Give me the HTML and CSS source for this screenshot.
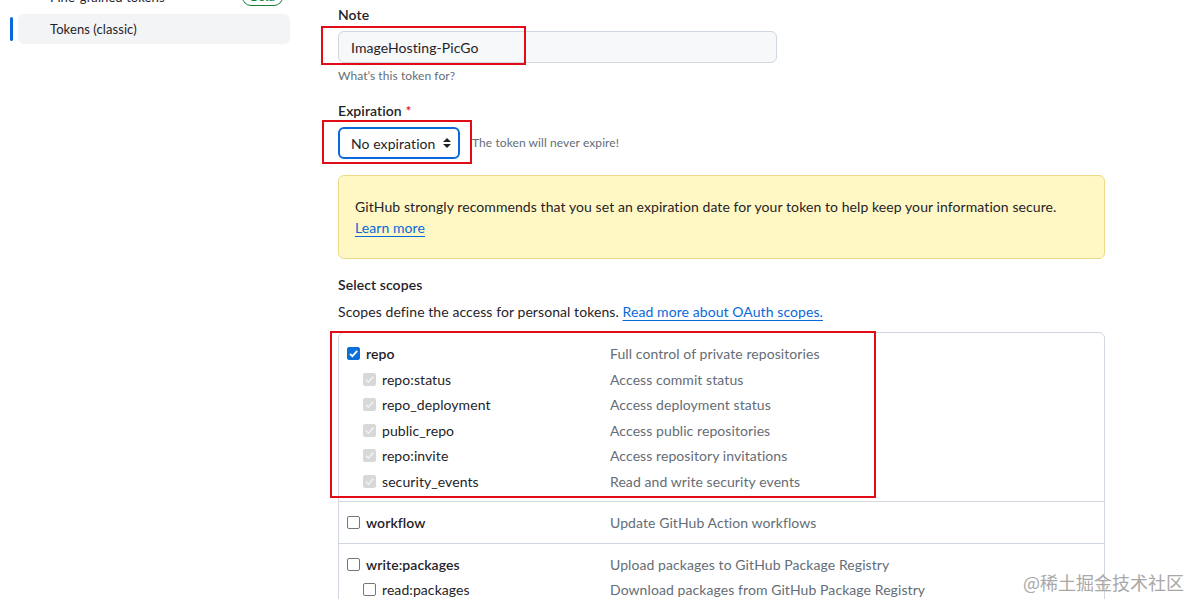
FILE: index.html
```html
<!DOCTYPE html>
<html>
<head>
<meta charset="utf-8">
<link rel="stylesheet" href="styles.css">
</head>
<body>
<div class="page">
  <aside class="sidebar">
    <div class="nav-item">
      <span class="nav-bar empty"></span>
      <span class="nav-link">Fine-grained tokens <span class="badge">Beta</span></span>
    </div>
    <div class="nav-item">
      <span class="nav-bar"></span>
      <span class="nav-link active">Tokens (classic)</span>
    </div>
  </aside>

  <main class="main">
    <div class="field">
      <label class="label">Note</label>
      <div class="input">ImageHosting-PicGo</div>
      <p class="note">What’s this token for?</p>
    </div>

    <div class="field">
      <label class="label">Expiration <span class="req">*</span></label>
      <div class="select-row">
        <div class="select">No expiration
          <svg class="caret" width="10" height="12" viewBox="0 0 10 12"><path d="M5 1 L9 5 H1 Z M5 11 L1 7 H9 Z" fill="#1f2328"/></svg>
        </div>
        <span class="note inline">The token will never expire!</span>
      </div>
    </div>

    <div class="flash">
      GitHub strongly recommends that you set an expiration date for your token to help keep your information secure.<br>
      <a class="link">Learn more</a>
    </div>

    <h3 class="label scopes-title">Select scopes</h3>
    <p class="desc">Scopes define the access for personal tokens. <a class="link">Read more about OAuth scopes.</a></p>

    <div class="scopes">
      <div class="scope-group">
        <div class="scope-row">
          <span class="scope-name"><span class="cb checked"><svg viewBox="0 0 13 13"><path d="M3 6.8 L5.4 9.2 L10.2 3.8" stroke="#fff" stroke-width="1.8" fill="none"/></svg></span><b>repo</b></span>
          <span class="scope-desc">Full control of private repositories</span>
        </div>
        <div class="scope-row sub">
          <span class="scope-name"><span class="cb disabled"><svg viewBox="0 0 13 13"><path d="M3 6.8 L5.4 9.2 L10.2 3.8" stroke="#f2f2f2" stroke-width="1.6" fill="none"/></svg></span>repo:status</span>
          <span class="scope-desc">Access commit status</span>
        </div>
        <div class="scope-row sub">
          <span class="scope-name"><span class="cb disabled"><svg viewBox="0 0 13 13"><path d="M3 6.8 L5.4 9.2 L10.2 3.8" stroke="#f2f2f2" stroke-width="1.6" fill="none"/></svg></span>repo_deployment</span>
          <span class="scope-desc">Access deployment status</span>
        </div>
        <div class="scope-row sub">
          <span class="scope-name"><span class="cb disabled"><svg viewBox="0 0 13 13"><path d="M3 6.8 L5.4 9.2 L10.2 3.8" stroke="#f2f2f2" stroke-width="1.6" fill="none"/></svg></span>public_repo</span>
          <span class="scope-desc">Access public repositories</span>
        </div>
        <div class="scope-row sub">
          <span class="scope-name"><span class="cb disabled"><svg viewBox="0 0 13 13"><path d="M3 6.8 L5.4 9.2 L10.2 3.8" stroke="#f2f2f2" stroke-width="1.6" fill="none"/></svg></span>repo:invite</span>
          <span class="scope-desc">Access repository invitations</span>
        </div>
        <div class="scope-row sub">
          <span class="scope-name"><span class="cb disabled"><svg viewBox="0 0 13 13"><path d="M3 6.8 L5.4 9.2 L10.2 3.8" stroke="#f2f2f2" stroke-width="1.6" fill="none"/></svg></span>security_events</span>
          <span class="scope-desc">Read and write security events</span>
        </div>
      </div>
      <div class="scope-group">
        <div class="scope-row">
          <span class="scope-name"><span class="cb"></span><b>workflow</b></span>
          <span class="scope-desc">Update GitHub Action workflows</span>
        </div>
      </div>
      <div class="scope-group">
        <div class="scope-row">
          <span class="scope-name"><span class="cb"></span><b>write:packages</b></span>
          <span class="scope-desc">Upload packages to GitHub Package Registry</span>
        </div>
        <div class="scope-row sub">
          <span class="scope-name"><span class="cb"></span>read:packages</span>
          <span class="scope-desc">Download packages from GitHub Package Registry</span>
        </div>
      </div>
    </div>

    <div class="mark mark-note"></div>
    <div class="mark mark-exp"></div>
    <div class="mark mark-scopes"></div>
  </main>
</div>
<div class="watermark">@稀土掘金技术社区</div>
</body>
</html>
```

FILE: styles.css
```css
* { box-sizing: border-box; }
html, body { margin: 0; padding: 0; background: #fff; }
body {
  font-family: Lato, "Noto Sans", sans-serif;
  font-size: 14px;
  letter-spacing: 0.08px;
  color: #1f2328;
  overflow: hidden;
  height: 599px;
  position: relative;
}
.page {
  display: flex;
  align-items: flex-start;
}
.sidebar {
  width: 290px;
  padding-left: 10px;
  margin-top: -18px;
  display: flex;
  flex-direction: column;
  gap: 2px;
}
.nav-item {
  display: flex;
  align-items: center;
  gap: 5px;
}
.nav-bar {
  width: 3px;
  height: 24px;
  border-radius: 3px;
  background: #0969da;
}
.nav-bar.empty { background: transparent; }
.nav-link {
  flex: 1;
  height: 30px;
  display: flex;
  align-items: center;
  justify-content: space-between;
  padding: 0 7px 0 32px;
  border-radius: 6px;
  font-size: 13px;
  color: #1f2328;
}
.nav-link.active { background: #f3f4f6; }
.badge {
  font-size: 12px;
  color: #1a7f37;
  border: 1px solid #1a7f37;
  border-radius: 2em;
  padding: 0 7px;
  line-height: 16px;
}
.main {
  position: relative;
  margin-left: 48px;
  width: 767px;
  padding-top: 5px;
}
.field { display: flex; flex-direction: column; }
.label {
  font-size: 14px;
  font-weight: 600;
  line-height: 20px;
  margin: 0 0 6px;
}
.req { color: #d1242f; }
.input {
  width: 439px;
  height: 32px;
  background: #f6f8fa;
  border: 1px solid #d0d7de;
  border-radius: 6px;
  padding: 0 12px;
  display: flex;
  align-items: center;
  font-size: 14px;
}
.note {
  font-size: 12px;
  line-height: 18px;
  color: #656d76;
  margin: 4px 0 16px;
}
.note.inline { margin: 0; }
.select-row {
  display: flex;
  align-items: center;
  gap: 12px;
}
.select {
  width: 122px;
  height: 32px;
  border: 2px solid #0969da;
  border-radius: 6px;
  display: flex;
  align-items: center;
  justify-content: space-between;
  padding: 0 6px 0 11px;
  font-size: 14px;
}
.flash {
  margin-top: 16px;
  background: #fff8c5;
  border: 1px solid #eed98a;
  border-radius: 6px;
  padding: 20px 16px;
  line-height: 21px;
}
.link {
  color: #0969da;
  text-decoration: underline;
  text-underline-offset: 3px;
}
.scopes-title { margin-top: 16px; }
.desc {
  margin: 0 0 10px;
  line-height: 21px;
}
.scopes {
  border: 1px solid #d0d7de;
  border-radius: 6px;
  height: 300px;
}
.scope-group {
  padding: 8px 8px 7px;
  border-bottom: 1px solid #d0d7de;
}
.scope-row {
  display: grid;
  grid-template-columns: 263px 1fr;
  height: 25.5px;
  align-items: center;
}
.scope-name {
  display: flex;
  align-items: center;
  gap: 6px;
}
.scope-row.sub .scope-name { padding-left: 16px; }
.scope-name b { font-weight: 600; }
.scope-desc { color: #656d76; }
.cb {
  width: 13px;
  height: 13px;
  border: 1px solid #767676;
  border-radius: 2px;
  background: #fff;
  display: inline-flex;
}
.cb svg { width: 13px; height: 13px; margin: -1px; }
.cb.checked { background: #0b6fd8; border-color: #0b6fd8; }
.cb.disabled { background: #d8d8d8; border-color: #d8d8d8; }
.mark {
  position: absolute;
  border: 2px solid #e20b18;
}
.mark-note { left: -17px; top: 26px; width: 205px; height: 39px; }
.mark-exp { left: -16px; top: 120px; width: 150px; height: 44px; }
.mark-scopes { left: -8px; top: 331px; width: 546px; height: 167px; }
.watermark {
  position: absolute;
  left: 1023px;
  top: 569px;
  font-family: "Noto Sans CJK SC", sans-serif;
  font-size: 18px;
  letter-spacing: 0;
  color: #a8a8a8;
}
```
